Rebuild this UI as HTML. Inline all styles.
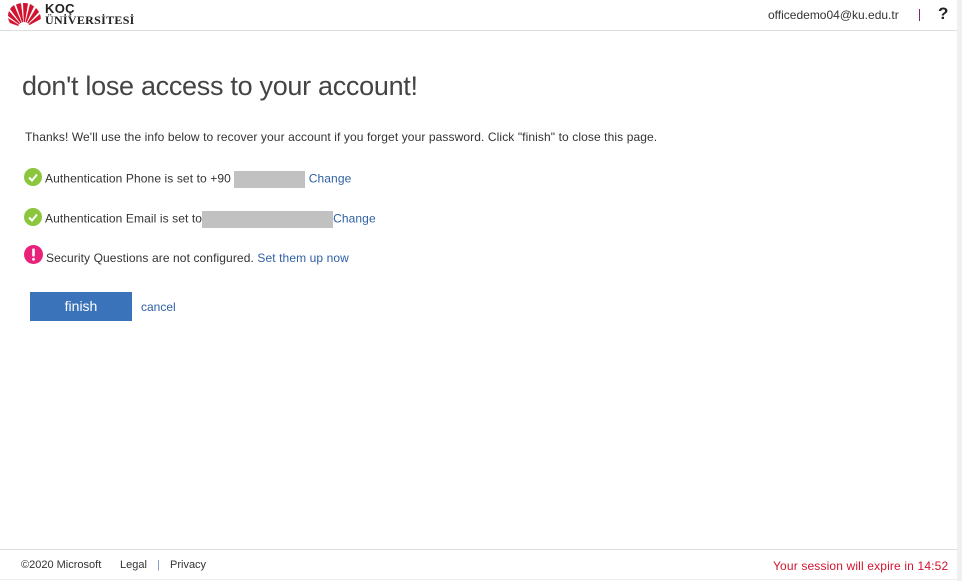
<!DOCTYPE html>
<html><head><meta charset="utf-8"><style>
*{margin:0;padding:0;box-sizing:border-box}
html,body{width:962px;height:581px;overflow:hidden;background:#fff;font-family:"Liberation Sans",sans-serif;color:#333}
.gut{position:absolute;right:0;top:0;width:5px;height:581px;background:#f0f0f0}
.hdr{position:absolute;left:0;top:0;width:957px;height:31px;border-bottom:1px solid #ddd}
.logo{position:absolute;left:7px;top:3px}
.lt{position:absolute;left:45px;top:3px;font-family:"Liberation Serif",serif;font-weight:bold;color:#222;font-size:12px;line-height:11px;letter-spacing:0.3px}
.lt b{font-family:"Liberation Sans",sans-serif;font-size:13px}
.user{position:absolute;left:768px;top:8px;font-size:12px;color:#333}
.bar{position:absolute;left:919px;top:9px;width:1px;height:12px;background:#7a2a7a}
.q{position:absolute;left:938px;top:4px;font-size:17px;font-weight:bold;color:#222}
h1{position:absolute;left:22px;top:71px;font-weight:normal;font-size:27px;color:#444;letter-spacing:-0.3px}
.p{position:absolute;left:25px;top:130px;font-size:12px;color:#333;letter-spacing:0.1px}
.row{position:absolute;left:24px;font-size:12px;color:#333;display:flex;align-items:center;letter-spacing:0.1px}
.row svg{margin-right:3px}
.red{display:inline-block;background:#c1c1c1;height:17px;vertical-align:middle}
a{color:#2f5fa5;text-decoration:none}
.btn{position:absolute;left:30px;top:292px;width:102px;height:29px;background:#3a73ba;color:#fff;font-size:14px;text-align:center;line-height:29px}
.cancel{position:absolute;left:141px;top:300px;font-size:12px}
.ftr{position:absolute;left:0;top:549px;width:957px;height:31px;border-top:1px solid #ddd;border-bottom:1px solid #eee;font-size:11px}
.ftr span{position:absolute;top:9px}
</style></head><body>
<div class="gut"></div>
<div class="hdr">
<svg class="logo" width="34" height="26" viewBox="0 0 34 26">
<g fill="#d2122e">
<path d="M17 25 L3 20 A15 15 0 0 1 1 15 Z"/><path d="M17 25 L1 13 A16 16 0 0 1 2 8 Z"/>
<path d="M17 25 L3 6 A16 16 0 0 1 7 2 Z"/><path d="M17 25 L9 1.5 A16 16 0 0 1 14 0.3 Z"/>
<path d="M17 25 L16 0 A16 16 0 0 1 21 0.5 Z"/><path d="M17 25 L23 1 A16 16 0 0 1 27 3.5 Z"/>
<path d="M17 25 L29 5 A16 16 0 0 1 32 9 Z"/><path d="M17 25 L33 11 A16 16 0 0 1 33.8 16 Z"/>
<circle cx="17" cy="25" r="6" fill="#fff"/>
</g></svg>
<div class="lt"><b>KOÇ</b><br>ÜNİVERSİTESİ</div>
<div class="user">officedemo04@ku.edu.tr</div>
<div class="bar"></div>
<div class="q">?</div>
</div>
<h1>don't lose access to your account!</h1>
<div class="p">Thanks! We'll use the info below to recover your account if you forget your password. Click "finish" to close this page.</div>
<div class="row" style="top:165px"><svg width="18" height="18"><circle cx="9" cy="9" r="9" fill="#8cc63f"/><path d="M5 9.5l3 3 5-6" stroke="#fff" stroke-width="2" fill="none"/></svg><span style="margin-top:6px">Authentication Phone is set to +90 <span class="red" style="width:71px"></span> <a href="#">Change</a></span></div>
<div class="row" style="top:205px"><svg width="18" height="18"><circle cx="9" cy="9" r="9" fill="#8cc63f"/><path d="M5 9.5l3 3 5-6" stroke="#fff" stroke-width="2" fill="none"/></svg><span style="margin-top:6px">Authentication Email is set to<span class="red" style="width:131px"></span><a href="#">Change</a></span></div>
<div class="row" style="top:243px"><svg width="19" height="19"><circle cx="9.5" cy="9.5" r="9.5" fill="#e8217a"/><rect x="8.2" y="3.5" width="2.6" height="8" rx="1" fill="#fff"/><circle cx="9.5" cy="14.3" r="1.4" fill="#fff"/></svg><span style="margin-top:8px">Security Questions are not configured. <a href="#">Set them up now</a></span></div>
<div class="btn">finish</div>
<a class="cancel" href="#">cancel</a>
<div class="ftr">
<span style="left:21px">©2020 Microsoft</span>
<span style="left:120px">Legal</span>
<span style="left:157px;color:#7a8fbf">|</span>
<span style="left:170px">Privacy</span>
<span style="left:773px;color:#d2122e;font-size:12px;letter-spacing:0.15px">Your session will expire in 14:52</span>
</div>
</body></html>
